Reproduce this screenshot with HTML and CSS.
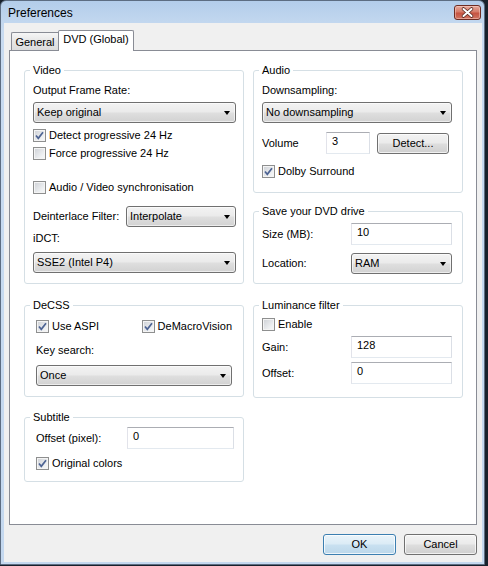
FILE: index.html
```html
<!DOCTYPE html>
<html>
<head>
<meta charset="utf-8">
<title>Preferences</title>
<link rel="stylesheet" href="styles.css">
</head>
<body>
<div class="window">
  <div class="titlebar">
    <span class="title">Preferences</span>
    <div class="close">
      <svg width="25" height="13" viewBox="0 0 25 13">
        <path d="M8.5 3 L16.5 10 M16.5 3 L8.5 10" stroke="#5a2a22" stroke-width="3.6" stroke-linecap="round" fill="none"/>
        <path d="M8.5 3 L16.5 10 M16.5 3 L8.5 10" stroke="#ffffff" stroke-width="2" stroke-linecap="round" fill="none"/>
      </svg>
    </div>
  </div>
  <div class="client">
    <div class="tabs">
      <div class="tab">General</div>
      <div class="tab active">DVD (Global)</div>
    </div>
    <div class="panel">
      <div class="col">
        <fieldset class="group g-video">
          <legend>Video</legend>
          <div class="lbl m7">Output Frame Rate:</div>
          <div class="select m5">Keep original</div>
          <div class="check m3"><span class="box on"><svg width="11" height="11" viewBox="0 0 11 11"><path d="M2 5.5 L4.3 8.3 L9 2.3" stroke="#4d6393" stroke-width="1.7" fill="none"/></svg></span>Detect progressive 24 Hz</div>
          <div class="check"><span class="box"></span>Force progressive 24 Hz</div>
          <div class="check m16"><span class="box"></span>Audio / Video synchronisation</div>
          <div class="row m10"><span>Deinterlace Filter:</span><div class="select w-deint">Interpolate</div></div>
          <div class="lbl m5">iDCT:</div>
          <div class="select m7">SSE2 (Intel P4)</div>
        </fieldset>
        <fieldset class="group g-decss">
          <legend>DeCSS</legend>
          <div class="row-checks m5">
            <div class="check w-aspi"><span class="box on"><svg width="11" height="11" viewBox="0 0 11 11"><path d="M2 5.5 L4.3 8.3 L9 2.3" stroke="#4d6393" stroke-width="1.7" fill="none"/></svg></span>Use ASPI</div>
            <div class="check"><span class="box on"><svg width="11" height="11" viewBox="0 0 11 11"><path d="M2 5.5 L4.3 8.3 L9 2.3" stroke="#4d6393" stroke-width="1.7" fill="none"/></svg></span>DeMacroVision</div>
          </div>
          <div class="lbl m9">Key search:</div>
          <div class="select m8">Once</div>
        </fieldset>
        <fieldset class="group g-sub">
          <legend>Subtitle</legend>
          <div class="row m3"><span>Offset (pixel):</span><div class="input w-suboff">0</div></div>
          <div class="check m5"><span class="box on"><svg width="11" height="11" viewBox="0 0 11 11"><path d="M2 5.5 L4.3 8.3 L9 2.3" stroke="#4d6393" stroke-width="1.7" fill="none"/></svg></span>Original colors</div>
        </fieldset>
      </div>
      <div class="col">
        <fieldset class="group g-audio">
          <legend>Audio</legend>
          <div class="lbl m7">Downsampling:</div>
          <div class="select m5">No downsampling</div>
          <div class="row-vol m9">
            <span class="vol-lbl">Volume</span>
            <div class="input w-vol">3</div>
            <div class="btn w-detect">Detect...</div>
          </div>
          <div class="check m8"><span class="box on"><svg width="11" height="11" viewBox="0 0 11 11"><path d="M2 5.5 L4.3 8.3 L9 2.3" stroke="#4d6393" stroke-width="1.7" fill="none"/></svg></span>Dolby Surround</div>
        </fieldset>
        <fieldset class="group g-save">
          <legend>Save your DVD drive</legend>
          <div class="row m5"><span>Size (MB):</span><div class="input w-field">10</div></div>
          <div class="row m8"><span>Location:</span><div class="select w-field">RAM</div></div>
        </fieldset>
        <fieldset class="group g-lum">
          <legend>Luminance filter</legend>
          <div class="check m3"><span class="box"></span>Enable</div>
          <div class="row m3"><span>Gain:</span><div class="input w-field">128</div></div>
          <div class="row m4"><span>Offset:</span><div class="input w-field">0</div></div>
        </fieldset>
      </div>
    </div>
    <div class="buttons">
      <div class="btn default">OK</div>
      <div class="btn">Cancel</div>
    </div>
  </div>
</div>
</body>
</html>
```

FILE: styles.css
```css
* { box-sizing: border-box; }
html, body { margin: 0; padding: 0; }
body {
  width: 488px;
  height: 566px;
  overflow: hidden;
  background: #18212c;
  font-family: "Liberation Sans", Arial, sans-serif;
  font-size: 11px;
  color: #000;
}
.window {
  width: 485px;
  height: 565px;
  border: 1px solid #5d6d82;
  border-radius: 6px 6px 0 0;
  background: linear-gradient(#b3cdea, #c8dbf1 30px, #c4d8ef);
  display: flex;
  flex-direction: column;
}
.titlebar {
  height: 22px;
  display: flex;
  align-items: flex-start;
  padding-left: 7px;
}
.title {
  font-size: 12px;
  line-height: 22px;
  padding-top: 1px;
  color: #000;
}
.close {
  margin: 4px 3px 0 auto;
  width: 27px;
  height: 15px;
  border: 1px solid #6e2c22;
  border-radius: 3px;
  background: linear-gradient(#e6aa9c, #d67b69 45%, #c65442 55%, #d07563);
  box-shadow: inset 0 0 0 1px rgba(255,220,210,0.45);
  display: flex;
  align-items: center;
  justify-content: center;
}
.close svg { display: block; }
.client {
  flex: 1;
  margin: 0 2px 2px 3px;
  background: #f0f0f0;
  padding: 0 5px;
  display: flex;
  flex-direction: column;
}
.tabs {
  height: 27px;
  display: flex;
  align-items: flex-end;
  padding-left: 2px;
}
.tab {
  height: 18px;
  width: 47px;
  border: 1px solid #898c95;
  border-bottom: none;
  border-right: none;
  background: linear-gradient(#f6f6f6, #e6e6e6 50%, #dcdcdc);
  padding-top: 3px;
  line-height: 13px;
  text-align: center;
  border-radius: 2px 0 0 0;
}
.tab.active {
  height: 21px;
  width: 76px;
  border-right: 1px solid #898c95;
  background: #fff;
  margin-bottom: -1px;
  padding-top: 2px;
  position: relative;
  z-index: 1;
  border-radius: 2px 2px 0 0;
}
.panel {
  height: 475px;
  border: 1px solid #898c95;
  background: #fff;
  padding: 13px 0 0 14px;
  display: grid;
  grid-template-columns: 220px 210px;
  column-gap: 9px;
  align-items: start;
}
.col { display: flex; flex-direction: column; }
.group {
  margin: 0;
  min-width: 0;
  border: 1px solid #d5dfe5;
  border-radius: 3px;
  padding: 0 7px 0 8px;
  display: flex;
  flex-direction: column;
}
.group legend {
  padding: 0 3px;
  margin-left: -3px;
  line-height: 13px;
  font-size: 11px;
}
.g-video { height: 220px; }
.g-decss { height: 98px; margin-top: 15px; padding: 0 11px 0 11px; }
.g-decss legend, .g-sub legend { margin-left: -6px; }
.g-sub { height: 71px; margin-top: 14px; padding: 0 9px 0 11px; }
.g-audio { height: 129px; padding: 0 10px 0 8px; }
.g-save { height: 79px; margin-top: 12px; padding: 0 10px 0 8px; }
.g-lum { height: 99px; margin-top: 15px; padding: 0 10px 0 8px; }

.m2 { margin-top: 2px; }
.m3 { margin-top: 3px; }
.m4 { margin-top: 4px; }
.m5 { margin-top: 5px; }
.m6 { margin-top: 6px; }
.m7 { margin-top: 7px; }
.m8 { margin-top: 8px; }
.m9 { margin-top: 9px; }
.m10 { margin-top: 10px; }
.m16 { margin-top: 16px; }

.lbl { line-height: 13px; }
.row {
  display: flex;
  align-items: center;
  justify-content: space-between;
  line-height: 13px;
}
.row-checks { display: flex; }
.w-aspi { width: 107px; }
.check {
  height: 18px;
  display: flex;
  align-items: center;
  line-height: 13px;
}
.box {
  width: 13px;
  height: 13px;
  flex: none;
  margin-right: 3px;
  border: 1px solid #8e8f8f;
  background: linear-gradient(135deg, #cdd0d5, #eef0f2 70%, #f8f8f8);
  box-shadow: inset 0 0 0 1px #f4f4f4;
  display: flex;
  align-items: center;
  justify-content: center;
}
.box svg { display: block; }
.select {
  height: 21px;
  border: 1px solid #707070;
  border-radius: 3px;
  background: linear-gradient(#f3f3f3, #ebebeb 45%, #dedede 55%, #d2d2d2);
  box-shadow: inset 0 0 0 1px rgba(255,255,255,0.6);
  display: flex;
  align-items: center;
  padding-left: 3px;
  line-height: 13px;
}
.select::after {
  content: "";
  margin-left: auto;
  margin-right: 5px;
  border-left: 3.5px solid transparent;
  border-right: 3.5px solid transparent;
  border-top: 4px solid #000;
}
.w-deint { width: 110px; }
.w-field { width: 101px; }
.input {
  height: 22px;
  border: 1px solid;
  border-color: #abadb3 #dbdfe6 #e3e9ef #e2e3ea;
  background: #fff;
  padding: 2px 0 0 5px;
  line-height: 13px;
}
.w-suboff { width: 107px; }
.row-vol {
  display: flex;
  align-items: center;
  height: 22px;
}
.vol-lbl { width: 64px; line-height: 13px; }
.w-vol { width: 44px; }
.btn {
  width: 73px;
  height: 21px;
  border: 1px solid #707070;
  border-radius: 3px;
  background: linear-gradient(#f3f3f3, #ebebeb 45%, #dddddd 55%, #cfcfcf);
  box-shadow: inset 0 0 0 1px rgba(255,255,255,0.7);
  display: flex;
  align-items: center;
  justify-content: center;
  line-height: 13px;
}
.w-detect { width: 72px; margin-left: 7px; }
.buttons {
  display: flex;
  justify-content: flex-end;
  gap: 8px;
  margin-top: 9px;
}
.btn.default {
  border-color: #3c7fb1;
  background: linear-gradient(#eaf4fa, #dcecf6 45%, #c8e0f0 55%, #bcd7ea);
  box-shadow: inset 0 0 0 1px rgba(255,255,255,0.75);
}
```
